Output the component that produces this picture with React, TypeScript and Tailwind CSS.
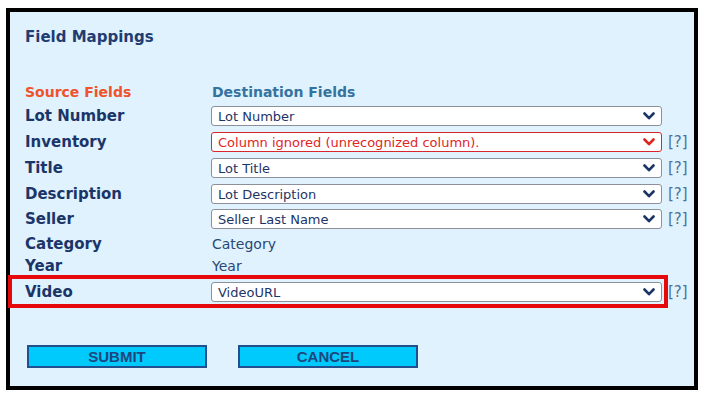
const font = { fontFamily: '"DejaVu Sans", Verdana, sans-serif' }

type Row = {
  label: string
  value: string
  kind: "select" | "text"
  error?: boolean
  help?: boolean
  mt: string
}

const rows: Row[] = [
  { label: "Lot Number", value: "Lot Number", kind: "select", mt: "mt-[5px]" },
  { label: "Inventory", value: "Column ignored (unrecognized column).", kind: "select", error: true, help: true, mt: "mt-[6px]" },
  { label: "Title", value: "Lot Title", kind: "select", help: true, mt: "mt-[6px]" },
  { label: "Description", value: "Lot Description", kind: "select", help: true, mt: "mt-[6px]" },
  { label: "Seller", value: "Seller Last Name", kind: "select", help: true, mt: "mt-[5px]" },
  { label: "Category", value: "Category", kind: "text", mt: "mt-[5px]" },
  { label: "Year", value: "Year", kind: "text", mt: "mt-[2px]" },
  { label: "Video", value: "VideoURL", kind: "select", help: true, mt: "mt-[6px]" },
]

function Chevron({ error }: { error?: boolean }) {
  return (
    <svg width="12" height="8" viewBox="0 0 12 8" className="shrink-0">
      <polyline
        points="1.5,1.5 6,6.2 10.5,1.5"
        fill="none"
        stroke={error ? "#e0261f" : "#1c3566"}
        strokeWidth="2.6"
        strokeLinecap="round"
        strokeLinejoin="round"
      />
    </svg>
  )
}

function FakeSelect({ value, error }: { value: string; error?: boolean }) {
  return (
    <div
      className={
        error
          ? "flex h-[20px] w-[451px] items-center justify-between rounded-[3px] border border-[#d8262a] bg-white pl-[6px] pr-[6px] text-[13px] text-[#e0261f]"
          : "flex h-[20px] w-[451px] items-center justify-between rounded-[3px] border border-[#8d8f99] bg-white pl-[6px] pr-[6px] text-[13px] text-[#1d3566]"
      }
    >
      <span className="leading-none">{value}</span>
      <Chevron error={error} />
    </div>
  )
}

export default function App() {
  return (
    <div className="h-[401px] w-[708px] bg-white pl-[6px] pt-[8px]" style={font}>
      <div className="relative h-[382px] w-[692px] border-4 border-black bg-[#dff2fd] pl-[15px] pt-[16px]">
        <h1 className="h-[18px] text-[15px] font-bold leading-[18px] text-[#1f3c73]">Field Mappings</h1>

        <div className="mt-[37px] flex h-[18px] items-center text-[14px] font-bold leading-none">
          <span className="w-[187px] text-[#f0532c]">Source Fields</span>
          <span className="text-[#35739f]">Destination Fields</span>
        </div>

        {rows.map((r) => (
          <div key={r.label} className={`flex h-[20px] items-center ${r.mt}`}>
            <span className="w-[186px] text-[15px] font-bold leading-none text-[#1b3569]">{r.label}</span>
            {r.kind === "select" ? (
              <FakeSelect value={r.value} error={r.error} />
            ) : (
              <span className="pl-[1px] text-[14px] leading-none text-[#2a4777]">{r.value}</span>
            )}
            {r.help && <span className="ml-[6px] text-[15px] leading-none text-[#50709a]">[?]</span>}
          </div>
        ))}

        <div className="ml-[2px] mt-[43px] flex gap-[31px]" style={{ fontFamily: '"Liberation Sans", Arial, sans-serif' }}>
          <button className="h-[23px] w-[180px] border-2 border-[#22508f] bg-[#00c9fb] text-[15px] font-bold leading-none text-[#1d4680]">
            SUBMIT
          </button>
          <button className="h-[23px] w-[180px] border-2 border-[#22508f] bg-[#00c9fb] text-[15px] font-bold leading-none text-[#1d4680]">
            CANCEL
          </button>
        </div>

        <div className="pointer-events-none absolute left-[-2px] top-[263px] h-[33px] w-[660px] border-4 border-[#e5090b]" />
      </div>
    </div>
  )
}
